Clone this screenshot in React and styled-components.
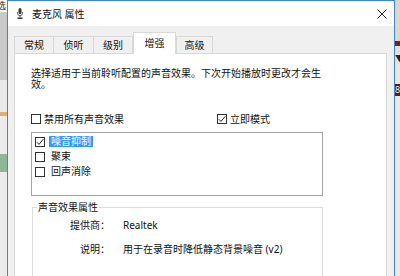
import React from 'react';
import styled, { createGlobalStyle } from 'styled-components';

const Global = createGlobalStyle`
  html, body { margin: 0; padding: 0; background: #f0f0f0; overflow: hidden; }
  body {
    font-family: "Noto Sans", "Noto Sans CJK SC", sans-serif;
    font-size: 10px;
    color: #000;
  }
  * { box-sizing: border-box; }
`;

const Screen = styled.div`
  display: flex;
  width: 400px;
  height: 276px;
  overflow: hidden;
`;

const SideStrip = styled.div`
  width: ${p => p.$w}px;
  flex: none;
  display: flex;
  flex-direction: column;
  overflow: hidden;
  background: ${p => p.$bg};
`;

const StripBlock = styled.div`
  height: ${p => p.$h}px;
  flex: none;
  background: ${p => p.$c};
  color: ${p => p.$fg || '#333'};
  font-size: 9px;
  line-height: ${p => p.$h}px;
  white-space: nowrap;
  overflow: hidden;
  text-indent: ${p => p.$indent || 0}px;
`;

const Window = styled.div`
  width: 388px;
  flex: none;
  display: flex;
  flex-direction: column;
  border: 1px solid #3b86dc;
  border-bottom: none;
  background: #f0f0f0;
`;

const TitleBar = styled.div`
  height: 25px;
  flex: none;
  display: flex;
  align-items: center;
  background: #fff;
  padding-left: 9px;
`;

const TitleText = styled.div`
  margin-left: 9px;
  font-size: 10px;
  line-height: 12px;
  color: #111;
  flex: 1;
`;

const CloseButton = styled.div`
  width: 24px;
  height: 25px;
  display: flex;
  align-items: center;
  justify-content: center;
`;

const Body = styled.div`
  flex: 1;
  display: flex;
  flex-direction: column;
  padding: 7px 7px 0 6px;
`;

const TabRow = styled.div`
  display: flex;
  align-items: flex-end;
  height: 21px;
  margin-bottom: -1px;
  position: relative;
  z-index: 1;
`;

const Tab = styled.div`
  width: ${p => p.$w}px;
  margin-left: ${p => p.$ml || 0}px;
  height: ${p => (p.$active ? 22 : 18)}px;
  border: 1px solid #d9d9d9;
  border-bottom: ${p => (p.$active ? 'none' : '1px solid #d9d9d9')};
  background: ${p => (p.$active ? '#fff' : '#f0f0f0')};
  display: flex;
  align-items: center;
  justify-content: center;
  font-size: 10px;
  padding-bottom: ${p => (p.$active ? 3 : 1)}px;
  color: #111;
`;

const Panel = styled.div`
  flex: 1;
  background: #fff;
  border: 1px solid #d9d9d9;
  border-bottom: none;
  padding: 14px 0 0 16px;
`;

const Description = styled.div`
  width: 296px;
  line-height: 11px;
  color: #111;
`;

const OptionsRow = styled.div`
  display: grid;
  grid-template-columns: 186px auto;
  margin-top: 22px;
  height: 14px;
  align-items: center;
`;

const CheckLabel = styled.label`
  display: flex;
  align-items: center;
  gap: ${p => p.$gap || 3}px;
  line-height: 14px;
  color: #111;
`;

const Box = styled.span`
  width: 10px;
  height: 10px;
  flex: none;
  border: 1px solid #333;
  background: #fff;
  display: flex;
  align-items: center;
  justify-content: center;
`;

const EffectList = styled.div`
  margin-top: 6px;
  width: 292px;
  height: 64px;
  border: 1px solid #a5a5a5;
  background: #fff;
  padding: 1px 0 0 3px;
`;

const ListItem = styled.div`
  height: 15px;
  display: flex;
  align-items: center;
`;

const ItemText = styled.span`
  padding: 0 2px;
  line-height: 11px;
  background: ${p => (p.$selected ? '#3399ff' : 'transparent')};
  color: ${p => (p.$selected ? '#fff' : '#111')};
`;

const GroupBox = styled.fieldset`
  margin: 4px 0 0 1px;
  width: 291px;
  height: 90px;
  border: 1px solid #dcdcdc;
  padding: 4px 0 0 0;
`;

const GroupLegend = styled.legend`
  margin-left: 4px;
  padding: 0 1px;
  line-height: 14px;
  color: #111;
`;

const PropGrid = styled.div`
  display: grid;
  grid-template-columns: 77px 1fr;
  column-gap: 13px;
  row-gap: 10px;
  line-height: 14px;
`;

const PropLabel = styled.div`
  text-align: right;
  color: #111;
`;

const PropValue = styled.div`
  color: #111;
  white-space: nowrap;
`;

const Check = () => (
  <svg width="8" height="8" viewBox="0 0 8 8">
    <path d="M0.8 4.2 L3 6.4 L7.3 1.2" fill="none" stroke="#222" strokeWidth="1" />
  </svg>
);

const CheckBox = ({ checked }) => <Box>{checked && <Check />}</Box>;

const MicIcon = () => (
  <svg width="6" height="11" viewBox="0 0 6 11">
    <rect x="1.5" y="0" width="3" height="6" rx="1.5" fill="#3a3a3a" />
    <path d="M0.5 4 V5.2 A2.5 2.5 0 0 0 5.5 5.2 V4" fill="none" stroke="#555" strokeWidth="0.9" />
    <path d="M3 7.8 V9.6" stroke="#555" strokeWidth="1" />
    <rect x="0.5" y="9.5" width="5" height="1.5" fill="#3a3a3a" />
  </svg>
);

const CloseIcon = () => (
  <svg width="10" height="10" viewBox="0 0 10 10">
    <path d="M0.5 0.5 L9.5 9.5 M9.5 0.5 L0.5 9.5" stroke="#222" strokeWidth="1" />
  </svg>
);

export default function App() {
  return (
    <>
      <Global />
      <Screen>
        <SideStrip $w={7} $bg="#ebebeb">
          <StripBlock $h={12} $c="#f7f7f7" $indent={-3}>选</StripBlock>
          <StripBlock $h={68} $c="#c9c9c9" />
          <StripBlock $h={32} $c="#e9e9e9" />
          <StripBlock $h={4} $c="#e0b070" />
          <StripBlock $h={38} $c="#ebebeb" />
          <StripBlock $h={18} $c="#8fb59a" />
          <StripBlock $h={104} $c="#ebebeb" />
        </SideStrip>
        <Window>
          <TitleBar>
            <MicIcon />
            <TitleText>麦克风 属性</TitleText>
            <CloseButton><CloseIcon /></CloseButton>
          </TitleBar>
          <Body>
            <TabRow>
              <Tab $w={40}>常规</Tab>
              <Tab $w={41} $ml={-1}>侦听</Tab>
              <Tab $w={40} $ml={-1}>级别</Tab>
              <Tab $w={43} $active>增强</Tab>
              <Tab $w={37}>高级</Tab>
            </TabRow>
            <Panel>
              <Description>
                选择适用于当前聆听配置的声音效果。下次开始播放时更改才会生效。
              </Description>
              <OptionsRow>
                <CheckLabel><CheckBox />禁用所有声音效果</CheckLabel>
                <CheckLabel><CheckBox checked />立即模式</CheckLabel>
              </OptionsRow>
              <EffectList>
                <ListItem>
                  <CheckLabel $gap={4}><CheckBox checked /><ItemText $selected>噪音抑制</ItemText></CheckLabel>
                </ListItem>
                <ListItem>
                  <CheckLabel $gap={4}><CheckBox /><ItemText>聚束</ItemText></CheckLabel>
                </ListItem>
                <ListItem>
                  <CheckLabel $gap={4}><CheckBox /><ItemText>回声消除</ItemText></CheckLabel>
                </ListItem>
              </EffectList>
              <GroupBox>
                <GroupLegend>声音效果属性</GroupLegend>
                <PropGrid>
                  <PropLabel>提供商：</PropLabel>
                  <PropValue>Realtek</PropValue>
                  <PropLabel>说明：</PropLabel>
                  <PropValue>用于在录音时降低静态背景噪音 (v2)</PropValue>
                </PropGrid>
              </GroupBox>
            </Panel>
          </Body>
        </Window>
        <SideStrip $w={5} $bg="#efe8dc">
          <StripBlock $h={41} $c="#e2d6bf" />
          <StripBlock $h={5} $c="#6b2a18" />
          <StripBlock $h={8} $c="#e9dfcc" />
          <StripBlock $h={10} $c="#ece3d3" $fg="#222">▼</StripBlock>
          <StripBlock $h={20} $c="#efe6d6" />
          <StripBlock $h={12} $c="#5b1c12" $fg="#eee">8</StripBlock>
          <StripBlock $h={180} $c="#efe8dc" />
        </SideStrip>
      </Screen>
    </>
  );
}
